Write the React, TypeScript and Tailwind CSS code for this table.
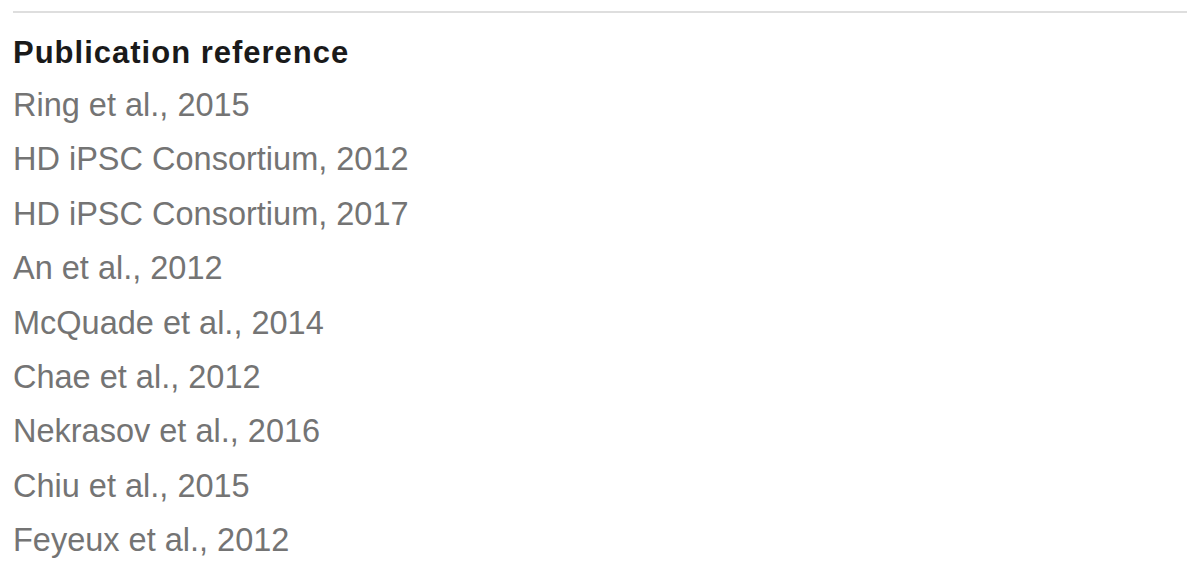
const refs = [
  'Ring et al., 2015',
  'HD iPSC Consortium, 2012',
  'HD iPSC Consortium, 2017',
  'An et al., 2012',
  'McQuade et al., 2014',
  'Chae et al., 2012',
  'Nekrasov et al., 2016',
  'Chiu et al., 2015',
  'Feyeux et al., 2012'
];

const App = () => {
  return (
    <div className="h-[570px] w-[1200px] bg-white px-[13px] pt-[11px] font-['Liberation_Sans',Arial,sans-serif]">
      <div className="border-t-2 border-[#dedede]" />
      <div className="mt-[21px] text-[31px] font-bold leading-[38px] tracking-[1px] text-[#1a1a1a]">
        Publication reference
      </div>
      <div className="mt-[6px] flex flex-col">
        {refs.map((r, i) => (
          <div key={i} className="text-[32.5px] leading-[54.4px] text-[#747474]">
            {r}
          </div>
        ))}
      </div>
    </div>
  );
};

export default App;
